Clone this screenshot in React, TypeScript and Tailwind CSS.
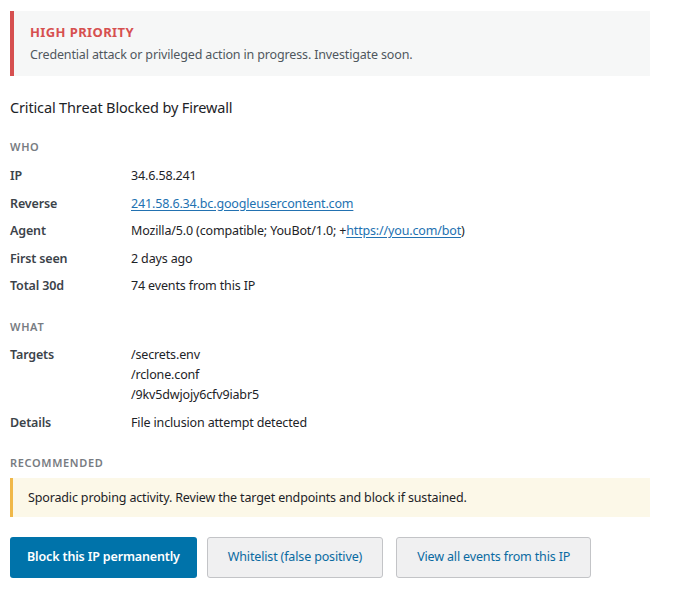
import { ReactNode } from 'react'

// ─── Small pieces ─────────────────────────────────────────────────────────────

function SectionLabel({ children }: { children: ReactNode }) {
  return (
    <div className="text-[11px] font-semibold tracking-[0.06em] text-[#787c82] uppercase">
      {children}
    </div>
  )
}

function Row({ label, children }: { label: string; children: ReactNode }) {
  return (
    <div className="flex">
      <div className="w-[121px] shrink-0 font-semibold text-[#3c434a]">{label}</div>
      <div className="text-[#1d2327]">{children}</div>
    </div>
  )
}

const link = 'text-[#2271b1] underline underline-offset-2'
const ghostBtn =
  'h-[41px] rounded-[3px] border border-[#c3c4c7] bg-[#f0f0f1] px-[20px] text-[#0a6aa1]'

// ─── Page ─────────────────────────────────────────────────────────────────────

export default function App() {
  return (
    <div className="min-h-screen bg-white font-['Segoe_UI','Noto_Sans',sans-serif] text-[12.5px] leading-[20px] tracking-[-0.15px] text-[#1d2327]">
      <div className="ml-[10px] w-[640px] pt-[11px] pb-[10px]">
        {/* priority banner */}
        <div className="border-l-4 border-[#d65050] bg-[#f6f7f7] pl-[16px] pr-4 pt-[11px] pb-[11px]">
          <div className="text-[13px] font-bold tracking-[0.03em] text-[#d65050]">HIGH PRIORITY</div>
          <div className="mt-[3px] text-[#50575e]">
            Credential attack or privileged action in progress. Investigate soon.
          </div>
        </div>

        <h2 className="mt-[20px] text-[14.5px] leading-[22px] font-normal text-[#1d2327]">
          Critical Threat Blocked by Firewall
        </h2>

        <div className="mt-[19px]">
          <SectionLabel>Who</SectionLabel>
          <div className="mt-[9px] flex flex-col gap-[7.5px]">
            <Row label="IP">34.6.58.241</Row>
            <Row label="Reverse">
              <span className={link}>241.58.6.34.bc.googleusercontent.com</span>
            </Row>
            <Row label="Agent">
              Mozilla/5.0 (compatible; YouBot/1.0; +<span className={link}>https://you.com/bot</span>)
            </Row>
            <Row label="First seen">2 days ago</Row>
            <Row label="Total 30d">74 events from this IP</Row>
          </div>
        </div>

        <div className="mt-[21px]">
          <SectionLabel>What</SectionLabel>
          <div className="mt-[8px] flex flex-col gap-[7.5px]">
            <Row label="Targets">
              <div>/secrets.env</div>
              <div>/rclone.conf</div>
              <div>/9kv5dwjojy6cfv9iabr5</div>
            </Row>
            <Row label="Details">File inclusion attempt detected</Row>
          </div>
        </div>

        <div className="mt-[20px]">
          <SectionLabel>Recommended</SectionLabel>
          <div className="mt-[5px] border-l-[3px] border-[#f0b849] bg-[#fcf8e8] pl-[15px] pr-4 pt-[10px] pb-[9px] text-[#1d2327]">
            Sporadic probing activity. Review the target endpoints and block if sustained.
          </div>
        </div>

        <div className="mt-[20px] flex gap-[10px]">
          <button
            type="button"
            className="h-[41px] rounded-[3px] bg-[#0073aa] px-[17px] font-semibold text-white"
          >
            Block this IP permanently
          </button>
          <button type="button" className={ghostBtn}>
            Whitelist (false positive)
          </button>
          <button type="button" className={`ml-[3px] ${ghostBtn}`}>
            View all events from this IP
          </button>
        </div>
      </div>
    </div>
  )
}
